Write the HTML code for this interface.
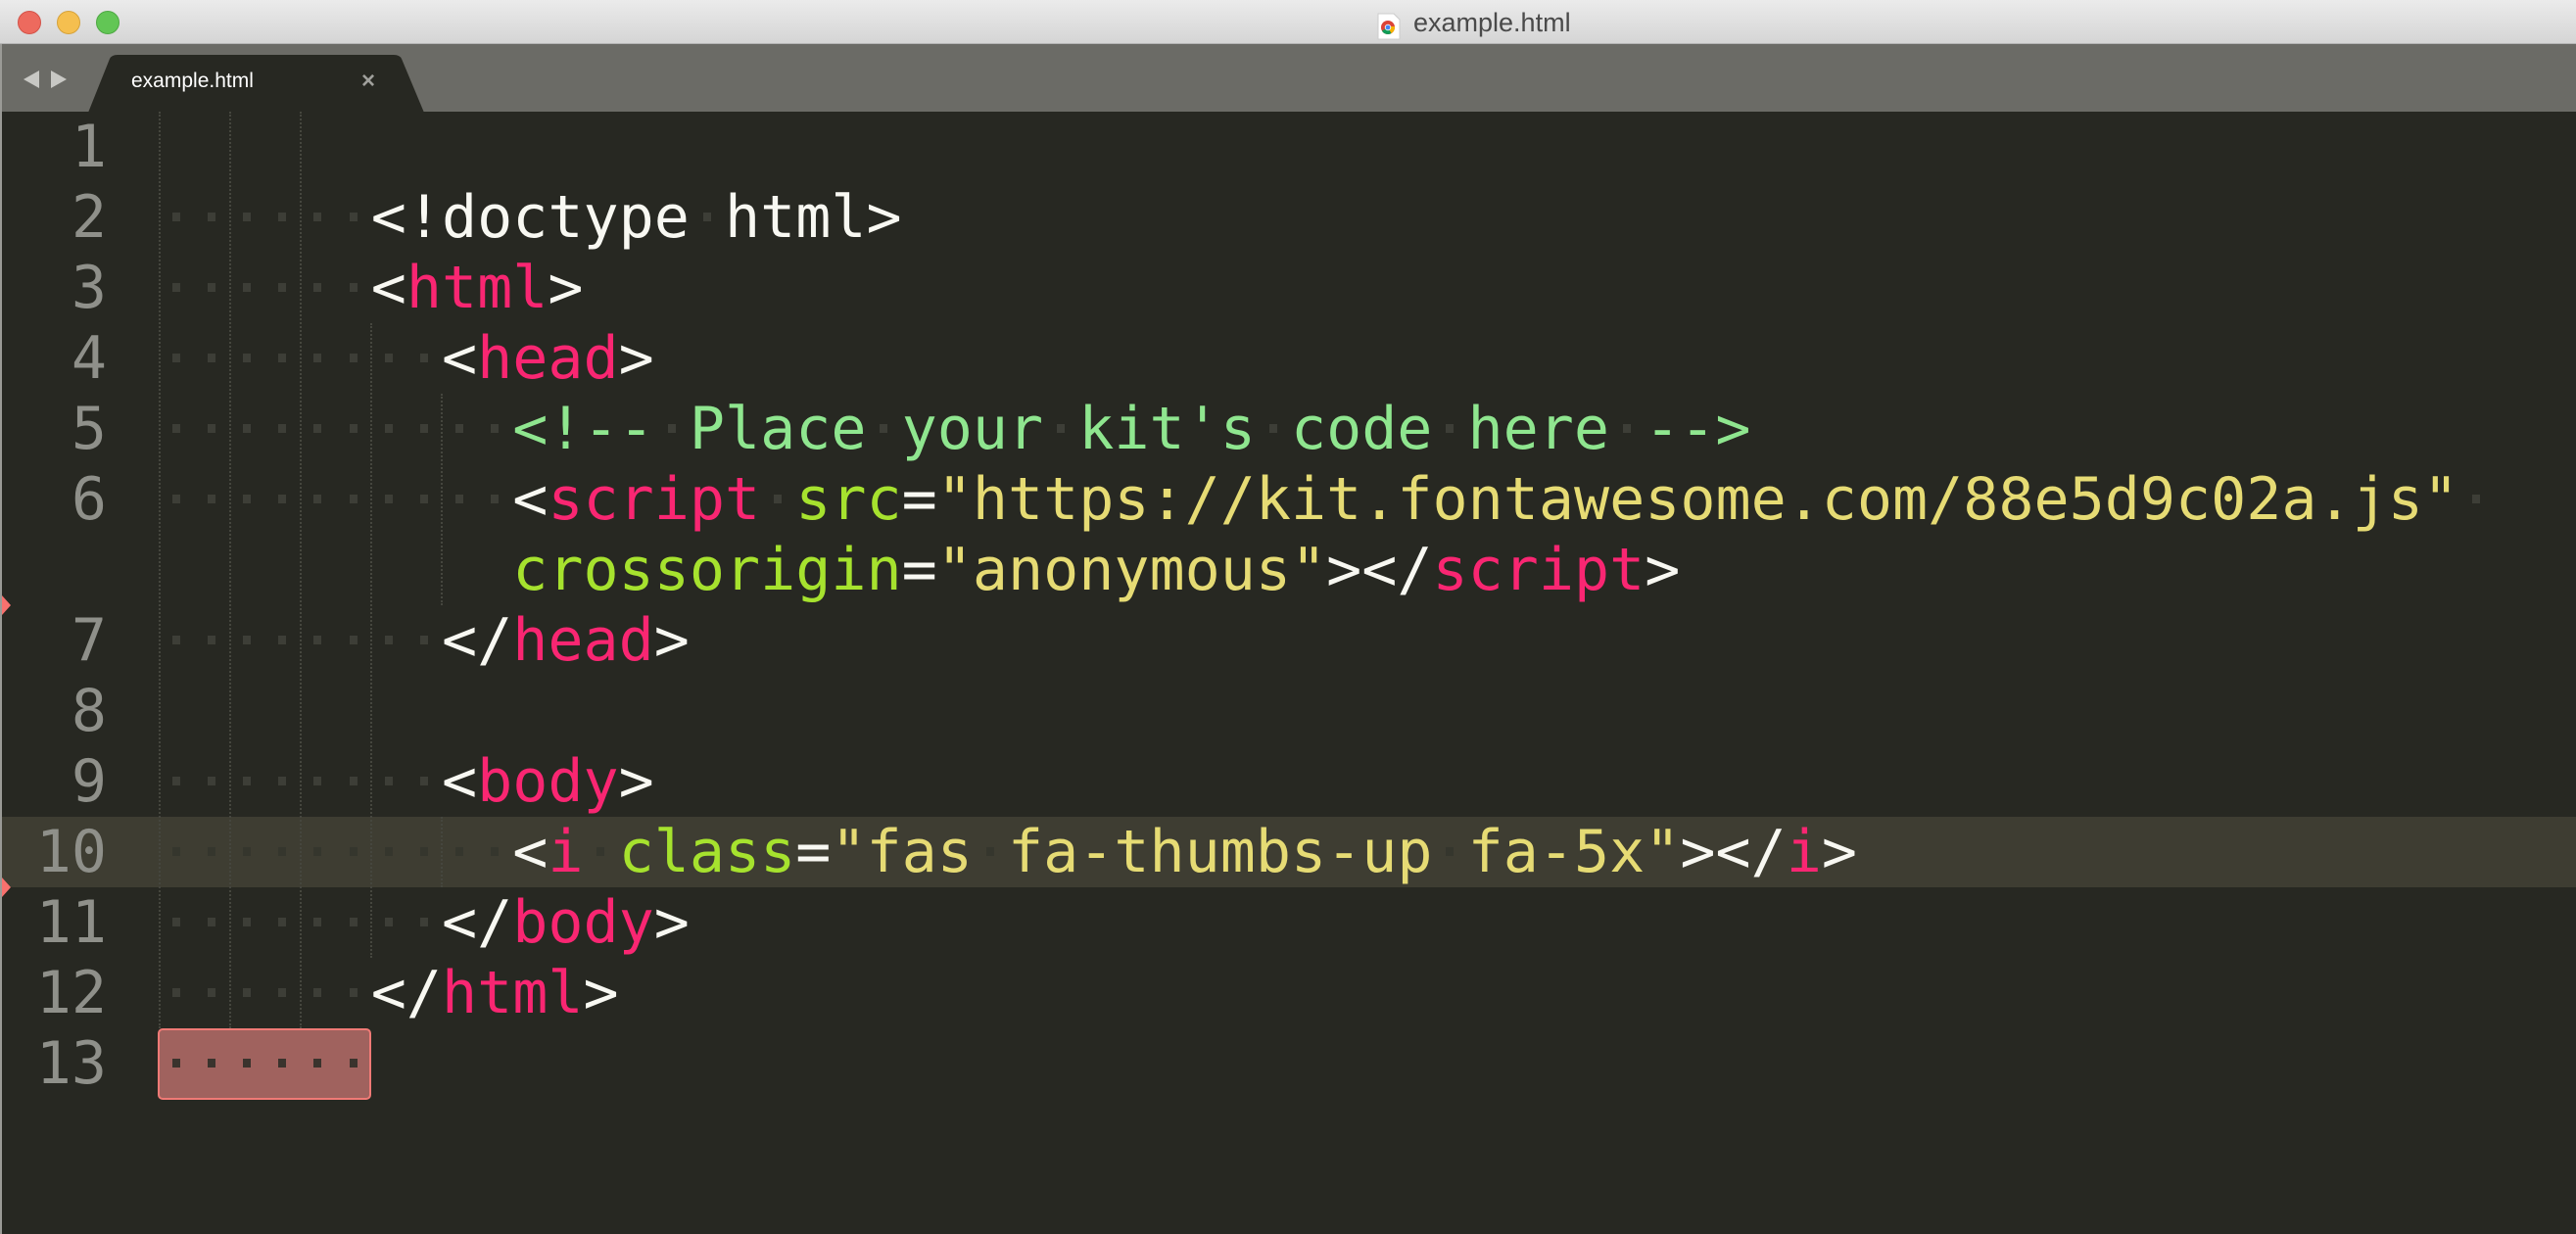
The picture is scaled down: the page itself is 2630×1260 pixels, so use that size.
<!DOCTYPE html>
<html><head><meta charset="utf-8"><style>
html,body{margin:0;padding:0}
body{width:2630px;height:1260px;overflow:hidden;background:#272822;position:relative;font-family:"Liberation Sans",sans-serif}
.title{position:absolute;left:0;top:0;width:2630px;height:45px;background:linear-gradient(#ebebeb,#d5d5d5);border-bottom:1px solid #b5b5b5;box-sizing:border-box}
.tl{position:absolute;top:11px;width:24px;height:24px;border-radius:50%;box-sizing:border-box}
.ttext{position:absolute;left:1443px;top:8px;font-size:27px;color:#4a4a4a;line-height:30px}
.tabbar{position:absolute;left:0;top:45px;width:2630px;height:69px;background:#6b6b66}
.code{position:absolute;left:162px;font-family:"DejaVu Sans Mono","Liberation Mono",monospace;font-size:60px;line-height:72px;height:72px;white-space:pre;color:#f8f8f2}
.ln{position:absolute;right:2521px;font-family:"DejaVu Sans Mono","Liberation Mono",monospace;font-size:60px;line-height:72px;color:#8f908a;text-align:right}
.t{color:#f92672}.a{color:#a6e22e}.s{color:#e6db74}.c{color:#8fe68f}
.dot{position:absolute;width:8px;height:9px;background:#3d3e37}
.g{position:absolute;width:0;border-left:2px dotted #45463e}
</style></head><body>
<div class="title">
<div class="tl" style="left:18px;background:#ed6a5e;border:1px solid #d35248"></div>
<div class="tl" style="left:58px;background:#f5bf4f;border:1px solid #d6a23a"></div>
<div class="tl" style="left:98px;background:#62c655;border:1px solid #4ea843"></div>
<svg style="position:absolute;left:1405px;top:13px" width="26" height="28" viewBox="0 0 26 28"><path d="M2 1h16l6 6v20H2z" fill="#fff" stroke="#ccc"/><circle cx="12" cy="15" r="7" fill="#db4437"/><path d="M12 15 L5.9 18.5 A7 7 0 0 0 15.5 21z" fill="#0f9d58"/><path d="M12 15 L15.5 21 A7 7 0 0 0 18.9 14 L12 14z" fill="#f4b400"/><circle cx="12" cy="15" r="3.2" fill="#fff"/><circle cx="12" cy="15" r="2.4" fill="#4285f4"/></svg>
<div class="ttext">example.html</div>
</div>
<div class="tabbar"></div>
<div style="position:absolute;left:0;top:45px;width:2px;height:1215px;background:#9a9a96"></div>
<svg style="position:absolute;left:22px;top:70px" width="50" height="22"><path d="M2 11 L18 2 V20z" fill="#c8c8c4"/><path d="M30 2 L46 11 L30 20z" fill="#c8c8c4"/></svg>
<svg style="position:absolute;left:88px;top:54px" width="350" height="61"><path d="M2 61 L24 6 Q26 2 32 2 L314 2 Q320 2 322 6 L345 61z" fill="#272822"/></svg>
<div style="position:absolute;left:134px;top:70px;font-size:21px;color:#fff;line-height:26px">example.html</div>
<div style="position:absolute;left:369px;top:70px;font-size:24px;color:#a0a09c;font-weight:bold;line-height:26px">×</div>

<div style="position:absolute;left:2px;top:834px;width:2628px;height:72px;background:#3e3d32"></div>

<div class="g" style="left:162px;top:114px;height:936px"></div>
<div class="g" style="left:234px;top:114px;height:936px"></div>
<div class="g" style="left:306px;top:114px;height:936px"></div>
<div class="g" style="left:378px;top:330px;height:648px"></div>
<div class="g" style="left:450px;top:402px;height:216px"></div>
<div class="g" style="left:450px;top:834px;height:72px"></div>

<div style="position:absolute;left:161px;top:1050px;width:218px;height:73px;background:#a0625e;border:2px solid #f07a76;border-radius:5px;box-sizing:border-box"></div>

<svg style="position:absolute;left:2px;top:608px" width="10" height="20"><path d="M0 0 L9 10 L0 20z" fill="#f8716e"/></svg>
<svg style="position:absolute;left:2px;top:896px" width="10" height="20"><path d="M0 0 L9 10 L0 20z" fill="#f8716e"/></svg>

<div class="ln" style="top:114px">1</div>
<div class="ln" style="top:186px">2</div>
<div class="ln" style="top:258px">3</div>
<div class="ln" style="top:330px">4</div>
<div class="ln" style="top:402px">5</div>
<div class="ln" style="top:474px">6</div>
<div class="ln" style="top:618px">7</div>
<div class="ln" style="top:690px">8</div>
<div class="ln" style="top:762px">9</div>
<div class="ln" style="top:834px">10</div>
<div class="ln" style="top:906px">11</div>
<div class="ln" style="top:978px">12</div>
<div class="ln" style="top:1050px">13</div>

<div id="dots"></div>
<div class="code" style="top:186px">      &lt;!doctype html&gt;</div>
<div class="code" style="top:258px">      &lt;<span class="t">html</span>&gt;</div>
<div class="code" style="top:330px">        &lt;<span class="t">head</span>&gt;</div>
<div class="code" style="top:402px">          <span class="c">&lt;!-- Place your kit's code here --&gt;</span></div>
<div class="code" style="top:474px">          &lt;<span class="t">script</span> <span class="a">src</span>=<span class="s">"https://kit.fontawesome.com/88e5d9c02a.js"</span> </div>
<div class="code nodot" style="top:546px">          <span class="a">crossorigin</span>=<span class="s">"anonymous"</span>&gt;&lt;/<span class="t">script</span>&gt;</div>
<div class="code" style="top:618px">        &lt;/<span class="t">head</span>&gt;</div>
<div class="code" style="top:762px">        &lt;<span class="t">body</span>&gt;</div>
<div class="code" style="top:834px">          &lt;<span class="t">i</span> <span class="a">class</span>=<span class="s">"fas fa-thumbs-up fa-5x"</span>&gt;&lt;/<span class="t">i</span>&gt;</div>
<div class="code" style="top:906px">        &lt;/<span class="t">body</span>&gt;</div>
<div class="code" style="top:978px">      &lt;/<span class="t">html</span>&gt;</div>
<div class="code" style="top:1050px">      </div>
<script>
(function(){
var out=document.getElementById('dots');var h='';
document.querySelectorAll('.code').forEach(function(el){
 var txt=el.textContent;var top=parseInt(el.style.top);
 var nd=el.classList.contains('nodot');
 for(var i=0;i<txt.length;i++){
  if(txt[i]===' '){
   if(nd)continue;
   var col=top===1050?'#3a332d':(top===834?'#35362d':'#3d3e37');
   h+='<div class="dot" style="left:'+(162+i*36.12+14)+'px;top:'+(top+31)+'px;background:'+col+'"></div>';
  }
 }
});
out.innerHTML=h;
})();
</script>
</body></html>
